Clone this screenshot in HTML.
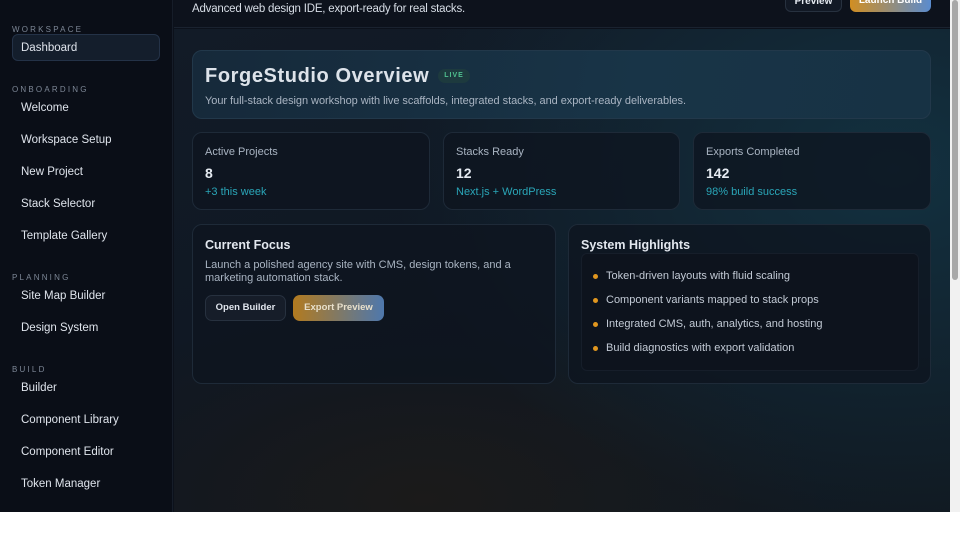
<!DOCTYPE html>
<html><head><meta charset="utf-8"><style>
*{box-sizing:border-box;margin:0;padding:0}
html,body{width:960px;height:540px;background:#fff;overflow:hidden;font-family:"Liberation Sans",sans-serif}
.app{position:absolute;left:0;top:0;width:950px;height:512px;background:#0c111b;overflow:hidden}
.side{position:absolute;left:0;top:0;width:173px;height:512px;background:#0a0e17;border-right:1px solid #161d29}
.lab{position:absolute;left:12px;font-size:8px;letter-spacing:2.2px;color:#7d8796}
.it{position:absolute;left:12px;width:148px;height:27px;padding-left:9px;line-height:27px;font-size:11.5px;color:#dfe4ec}
.it.act{background:#141e2c;border:1px solid #243247;border-radius:6px;padding-left:8px;line-height:25px}
.head{position:absolute;left:174px;top:0;width:776px;height:28px;background:#0d121c;border-bottom:1px solid #1a222f}
.main{position:absolute;left:174px;top:29px;width:776px;height:483px;background:radial-gradient(ellipse 500px 350px at 720px 140px,#133140 0%,rgba(19,49,64,0) 100%),radial-gradient(ellipse 400px 200px at 250px 470px,#1b1a1a 0%,rgba(27,26,26,0) 100%),linear-gradient(160deg,#121b27,#0f1722 60%,#111a22)}
.card{position:absolute;border:1px solid #1e2a38;border-radius:10px;background:rgba(14,20,31,0.75)}
.t{position:absolute;white-space:nowrap}
</style></head><body><div class="app">
<div class="side">
<div class="lab" style="top:25px">WORKSPACE</div>
<div class="it act" style="top:34px;line-height:26px">Dashboard</div>
<div class="lab" style="top:85px">ONBOARDING</div>
<div class="it" style="top:95px">Welcome</div>
<div class="it" style="top:127px">Workspace Setup</div>
<div class="it" style="top:159px">New Project</div>
<div class="it" style="top:191px">Stack Selector</div>
<div class="it" style="top:223px">Template Gallery</div>
<div class="lab" style="top:273px">PLANNING</div>
<div class="it" style="top:283px">Site Map Builder</div>
<div class="it" style="top:315px">Design System</div>
<div class="lab" style="top:365px">BUILD</div>
<div class="it" style="top:375px">Builder</div>
<div class="it" style="top:407px">Component Library</div>
<div class="it" style="top:439px">Component Editor</div>
<div class="it" style="top:471px">Token Manager</div>
</div>
<div class="head">
<div class="t" style="left:18px;top:3px;font-size:11.5px;color:#d7dde6;letter-spacing:-0.2px">Advanced web design IDE, export-ready for real stacks.</div>
<div style="position:absolute;left:611px;top:-10px;width:57px;height:22px;border:1px solid #27313f;border-radius:6px;background:#121925;color:#e6ebf2;font-size:10px;text-align:center;line-height:22px;font-weight:bold">Preview</div>
<div style="position:absolute;left:676px;top:-10px;width:81px;height:22px;border-radius:6px;background:linear-gradient(90deg,#d18e22,#5a8ccf);color:#fff;font-size:10px;text-align:center;line-height:22px;font-weight:bold">Launch Build</div>
</div>
<div class="main">
<div class="card" style="left:18px;top:21px;width:739px;height:69px;background:linear-gradient(100deg,#16293a,#183447 60%,#173244);border-color:#22384a">
<div class="t" style="left:12px;top:14px;font-size:20px;font-weight:bold;color:#dde3ea;letter-spacing:0.6px">ForgeStudio Overview</div>
<div class="t" style="left:245px;top:18px;width:32px;height:14px;border-radius:7px;background:#1d3a3e;color:#4fc08f;font-size:7px;letter-spacing:1px;text-align:center;line-height:14px;font-weight:bold">LIVE</div>
<div class="t" style="left:12px;top:44px;font-size:11px;color:#a9b4c2;letter-spacing:-0.05px">Your full-stack design workshop with live scaffolds, integrated stacks, and export-ready deliverables.</div>
</div>
<div class="card" style="left:18px;top:103px;width:238px;height:78px">
<div class="t" style="left:12px;top:13px;font-size:11px;color:#a9b4c2">Active Projects</div>
<div class="t" style="left:12px;top:32px;font-size:14px;font-weight:bold;color:#e6ebf2">8</div>
<div class="t" style="left:12px;top:53px;font-size:11px;color:#2aa6b8">+3 this week</div></div>
<div class="card" style="left:269px;top:103px;width:237px;height:78px">
<div class="t" style="left:12px;top:13px;font-size:11px;color:#a9b4c2">Stacks Ready</div>
<div class="t" style="left:12px;top:32px;font-size:14px;font-weight:bold;color:#e6ebf2">12</div>
<div class="t" style="left:12px;top:53px;font-size:11px;color:#2aa6b8">Next.js + WordPress</div></div>
<div class="card" style="left:519px;top:103px;width:238px;height:78px">
<div class="t" style="left:12px;top:13px;font-size:11px;color:#a9b4c2">Exports Completed</div>
<div class="t" style="left:12px;top:32px;font-size:14px;font-weight:bold;color:#e6ebf2">142</div>
<div class="t" style="left:12px;top:53px;font-size:11px;color:#2aa6b8">98% build success</div></div>
<div class="card" style="left:18px;top:195px;width:364px;height:160px">
<div class="t" style="left:12px;top:13px;font-size:12.5px;font-weight:bold;color:#e2e7ee">Current Focus</div>
<div class="t" style="left:12px;top:34px;font-size:11px;line-height:13px;color:#a9b4c2">Launch a polished agency site with CMS, design tokens, and a<br>marketing automation stack.</div>
<div class="t" style="left:12px;top:70px;width:81px;height:26px;border:1px solid #27313f;border-radius:7px;background:#161d29;color:#dfe4ec;font-size:9.5px;font-weight:bold;text-align:center;line-height:24px">Open Builder</div>
<div class="t" style="left:100px;top:70px;width:91px;height:26px;border-radius:7px;background:linear-gradient(90deg,#b27a1f,#4e78ad);color:#e8e0cc;font-size:9.5px;font-weight:bold;text-align:center;line-height:26px">Export Preview</div>
</div>
<div class="card" style="left:394px;top:195px;width:363px;height:160px">
<div class="t" style="left:12px;top:13px;font-size:12.5px;font-weight:bold;color:#e2e7ee">System Highlights</div>
<div style="position:absolute;left:12px;top:28px;width:338px;height:118px;background:#0d131d;border-radius:6px;border:1px solid #161e2a">
<div class="t" style="left:11px;top:16px;font-size:11px;color:#c2cad5"><span style="display:inline-block;width:5px;height:5px;border-radius:50%;background:#e0961f;margin-right:8px;vertical-align:middle"></span>Token-driven layouts with fluid scaling</div>
<div class="t" style="left:11px;top:40px;font-size:11px;color:#c2cad5"><span style="display:inline-block;width:5px;height:5px;border-radius:50%;background:#e0961f;margin-right:8px;vertical-align:middle"></span>Component variants mapped to stack props</div>
<div class="t" style="left:11px;top:64px;font-size:11px;color:#c2cad5"><span style="display:inline-block;width:5px;height:5px;border-radius:50%;background:#e0961f;margin-right:8px;vertical-align:middle"></span>Integrated CMS, auth, analytics, and hosting</div>
<div class="t" style="left:11px;top:88px;font-size:11px;color:#c2cad5"><span style="display:inline-block;width:5px;height:5px;border-radius:50%;background:#e0961f;margin-right:8px;vertical-align:middle"></span>Build diagnostics with export validation</div>
</div></div>
</div>
</div>
<div style="position:absolute;left:950px;top:0;width:10px;height:512px;background:#f1f1f1"></div>
<div style="position:absolute;left:952px;top:0;width:6px;height:280px;background:#a8a8a8;border-radius:3px"></div>
</body></html>
